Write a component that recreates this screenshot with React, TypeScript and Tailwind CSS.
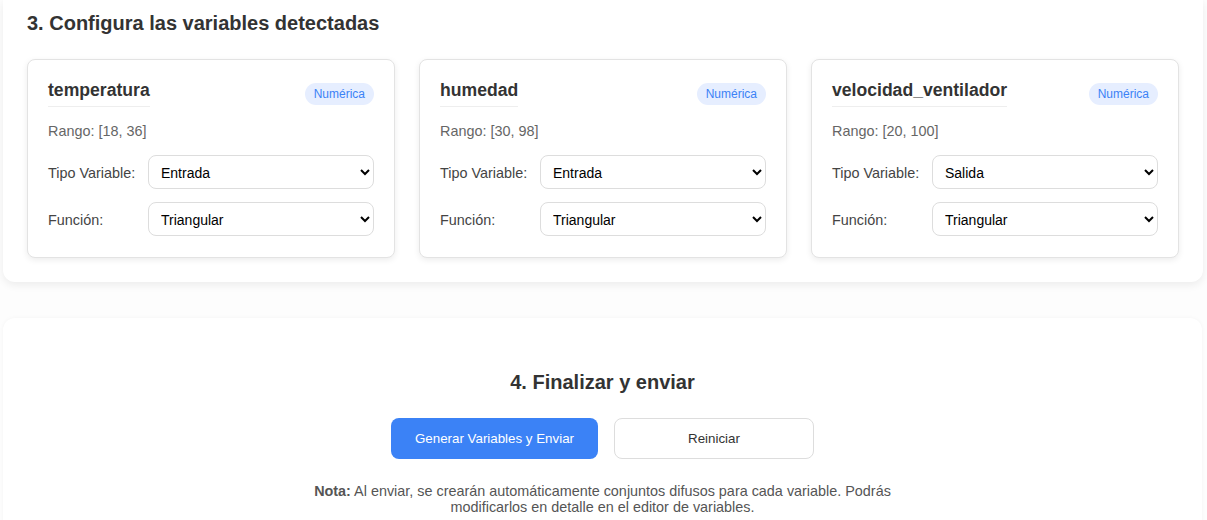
import React, { useState } from "react";

interface Variable {
	name: string;
	range: string;
	tipo: string;
	funcion: string;
}

const initialVars: Variable[] = [
	{ name: "temperatura", range: "[18, 36]", tipo: "Entrada", funcion: "Triangular" },
	{ name: "humedad", range: "[30, 98]", tipo: "Entrada", funcion: "Triangular" },
	{ name: "velocidad_ventilador", range: "[20, 100]", tipo: "Salida", funcion: "Triangular" },
];

const selectClass =
	"flex-1 h-[34px] rounded-lg border border-[#dddddd] bg-white pl-[8px] pr-2 pt-[2px] text-[14px] text-black outline-none";

interface VariableCardProps {
	variable: Variable;
	onChange: (v: Variable) => void;
}

const VariableCard: React.FC<VariableCardProps> = ({ variable, onChange }) => {
	return (
		<div className="rounded-lg border border-[#e3e3e3] bg-white px-5 pt-5 pb-[21px] shadow-[0_2px_6px_rgba(0,0,0,0.08)]">
			<div className="flex items-center justify-between">
				<h3 className="border-b border-[#eeeeee] pb-[5px] text-[17.6px] font-bold leading-[21px] text-[#333333]">
					{variable.name}
				</h3>
				<span className="rounded-full bg-[#e6eeff] px-[9px] py-[3px] text-[12px] leading-[16px] text-[#3b82f6]">
					Numérica
				</span>
			</div>
			<p className="mt-[14px] text-[14.4px] leading-[20px] text-[#666666]">Rango: {variable.range}</p>
			<div className="mt-[14px] flex items-center">
				<label className="w-[100px] pt-[2px] text-[14.4px] leading-[20px] text-[#444444]">Tipo Variable:</label>
				<select
					className={selectClass}
					value={variable.tipo}
					onChange={(e) => onChange({ ...variable, tipo: e.target.value })}
				>
					<option value="Entrada">Entrada</option>
					<option value="Salida">Salida</option>
				</select>
			</div>
			<div className="mt-[13px] flex items-center">
				<label className="w-[100px] pt-[2px] text-[14.4px] leading-[20px] text-[#444444]">Función:</label>
				<select
					className={selectClass}
					value={variable.funcion}
					onChange={(e) => onChange({ ...variable, funcion: e.target.value })}
				>
					<option value="Triangular">Triangular</option>
					<option value="Trapezoidal">Trapezoidal</option>
					<option value="Gaussiana">Gaussiana</option>
				</select>
			</div>
		</div>
	);
};

export default function App() {
	const [vars, setVars] = useState<Variable[]>(initialVars);

	const update = (i: number, v: Variable) => {
		setVars(vars.map((x, j) => (j === i ? v : x)));
	};

	return (
		<div
			className="min-h-screen bg-[#fdfdfd] pl-[3px] pr-[4px]"
			style={{ fontFamily: '"Liberation Sans", Arial, sans-serif' }}
		>
			<section className="rounded-b-xl bg-white px-6 pt-[11px] pb-6 shadow-[0_3px_8px_rgba(0,0,0,0.07)]">
				<h2 className="text-[20px] font-bold leading-[24px] text-[#333333]">3. Configura las variables detectadas</h2>
				<div className="mt-6 grid grid-cols-3 gap-6">
					{vars.map((v, i) => (
						<VariableCard key={v.name} variable={v} onChange={(nv) => update(i, nv)} />
					))}
				</div>
			</section>

			<section className="mt-9 mr-[1px] rounded-t-xl bg-white px-6 pt-[52px] pb-6 shadow-[0_0_4px_rgba(0,0,0,0.04)]">
				<h2 className="text-center text-[20px] font-bold leading-[24px] text-[#333333]">4. Finalizar y enviar</h2>
				<div className="mt-[24px] flex justify-center gap-4">
					<button className="h-[41px] w-[207px] rounded-lg bg-[#3b82f6] text-[13.33px] text-white">
						Generar Variables y Enviar
					</button>
					<button
						className="h-[41px] w-[200px] rounded-lg border border-[#dddddd] bg-white text-[13.33px] text-[#333333]"
						onClick={() => setVars(initialVars)}
					>
						Reiniciar
					</button>
				</div>
				<p className="mx-auto mt-[24px] max-w-[600px] text-center text-[14.4px] leading-[16px] text-[#555555]">
					<strong>Nota:</strong> Al enviar, se crearán automáticamente conjuntos difusos para cada variable. Podrás
					modificarlos en detalle en el editor de variables.
				</p>
			</section>
		</div>
	);
}
